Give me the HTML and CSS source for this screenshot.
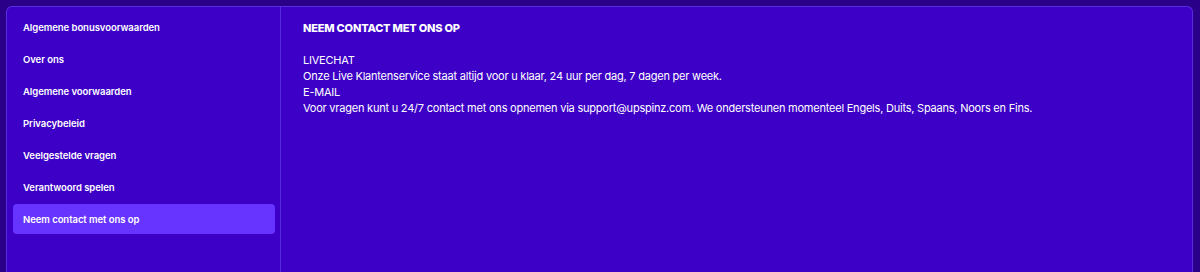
FILE: index.html
```html
<!DOCTYPE html>
<html lang="nl">
  <head>
    <meta charset="UTF-8" />
    <meta name="viewport" content="width=device-width, initial-scale=1.0" />
    <title>Neem contact met ons op</title>
    <link rel="stylesheet" href="styles.css">
  </head>
  <body>
    <div class="panel">
      <div class="sidebar">
        <a class="item" href="#">Algemene bonusvoorwaarden</a>
        <a class="item" href="#">Over ons</a>
        <a class="item" href="#">Algemene voorwaarden</a>
        <a class="item" href="#">Privacybeleid</a>
        <a class="item" href="#">Veelgestelde vragen</a>
        <a class="item" href="#">Verantwoord spelen</a>
        <a class="item active" href="#">Neem contact met ons op</a>
      </div>

      <div class="content">
        <h1 class="title">NEEM CONTACT MET ONS OP</h1>
        <div class="text">
          <p>LIVECHAT</p>
          <p>Onze Live Klantenservice staat altijd voor u klaar, 24 uur per dag, 7 dagen per week.</p>
          <p>E-MAIL</p>
          <p>Voor vragen kunt u 24/7 contact met ons opnemen via support@upspinz.com. We ondersteunen momenteel Engels, Duits, Spaans, Noors en Fins.</p>
        </div>
      </div>
    </div>
  </body>
</html>
```

FILE: styles.css
```css
* {
  margin: 0;
  padding: 0;
  box-sizing: border-box;
}

html,
body {
  height: 100%;
  overflow: hidden;
}

body {
  background-color: #2a0089;
  font-family: Inter, "Noto Sans", sans-serif;
  color: #fff;
  padding: 6px 7px 0 6px;
}

.panel {
  display: flex;
  background-color: #3d00c6;
  border: 1px solid #5a2ae0;
  border-bottom: none;
  border-radius: 6px 6px 0 0;
  height: 100%;
}

.sidebar {
  width: 274px;
  flex-shrink: 0;
  border-right: 1px solid #5a2ae0;
  padding: 5px 5px 0 6px;
  display: flex;
  flex-direction: column;
  gap: 2px;
}

.item {
  display: flex;
  align-items: center;
  height: 30px;
  padding-left: 10px;
  border-radius: 4px;
  color: #fff;
  text-decoration: none;
  font-size: 9.5px;
  font-weight: 600;
  letter-spacing: -0.05px;
}

.item.active {
  background-color: #6633ff;
}

.content {
  flex: 1;
  padding: 14px 22px 0 22px;
}

.title {
  font-size: 11px;
  font-weight: 800;
  line-height: 14px;
  letter-spacing: -0.2px;
  margin-bottom: 17px;
}

.text {
  font-size: 11px;
  line-height: 16px;
  font-weight: 400;
  letter-spacing: -0.22px;
}
```
